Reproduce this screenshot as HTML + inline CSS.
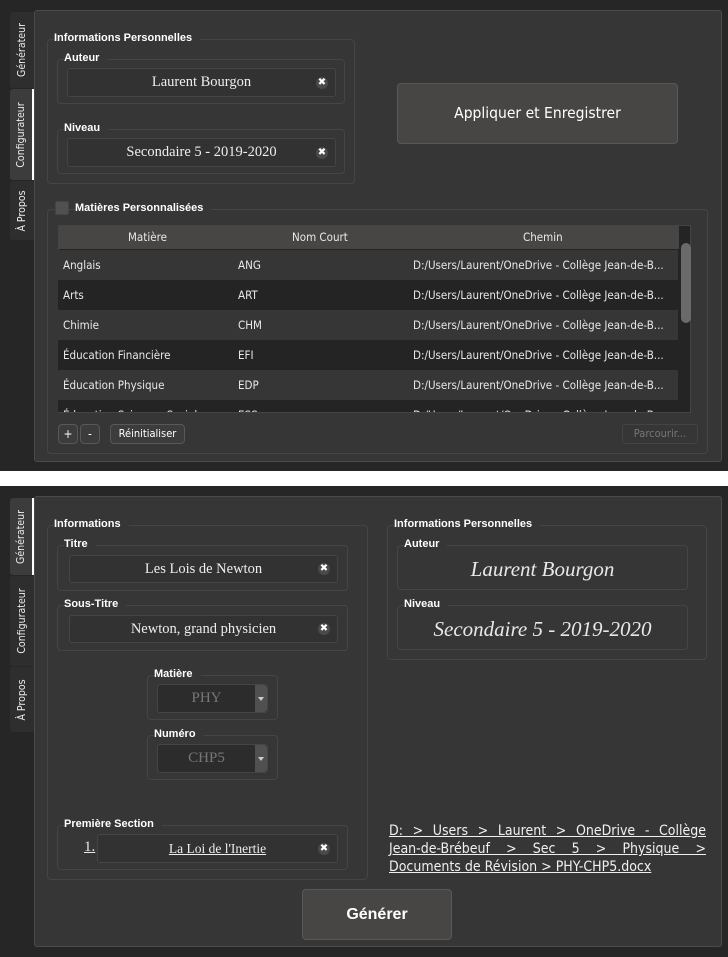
<!DOCTYPE html>
<html><head><meta charset="utf-8"><style>
*{box-sizing:border-box;margin:0;padding:0}
body{width:728px;height:957px;background:#fff;position:relative;overflow:hidden;font-family:"DejaVu Sans Condensed","Liberation Sans",sans-serif;color:#e8e8e8}
.a{position:absolute}
.scr{position:absolute;left:0;width:728px;background:#262626}
.panel{position:absolute;background:#363636;border:1px solid #4a4a4a;border-radius:3px}
.tab{position:absolute;left:10px;width:24px;background:#2e2e2e;border-radius:3px 0 0 3px}
.tab.sel{background:#3c3c3c;border-right:2px solid #fff}
.tab span{position:absolute;left:50%;top:50%;transform:translate(-50%,-50%) rotate(-90deg);white-space:nowrap;font-size:10.5px;color:#eee}
.grp{position:absolute;border:1px solid #454545;border-radius:4px}
.gt{position:absolute;font-family:"Liberation Sans",sans-serif;font-weight:bold;font-size:11px;color:#fff;background:#363636;padding-right:8px;line-height:12px;white-space:nowrap}
.inp{position:absolute;border:1px solid #454545;border-radius:3px;background:#323232;font-family:"Liberation Serif",serif;font-size:14.5px;color:#eee;text-align:center}
.x{position:absolute;right:7px;top:50%;margin-top:-6px;width:12px;height:12px;border-radius:50%;background:#4a4a4a;color:#fff;font-size:10px;line-height:12px;text-align:center;font-family:"DejaVu Sans",sans-serif;font-weight:bold}
.btn{position:absolute;background:#484644;border:1px solid #5a5856;border-radius:4px;text-align:center;color:#fff}
.row{position:absolute;left:58px;width:620px;height:30px;font-size:11.5px;line-height:30px}
.row span{position:absolute}
.cb{position:absolute;border:1px solid #454545;border-radius:3px;background:#2c2c2c;font-family:"Liberation Serif",serif;font-size:15px;color:#777;text-align:center}
.cb i{position:absolute;right:0;top:0;bottom:0;width:12px;background:#505050;border-radius:0 3px 3px 0}
.cb i:after{content:"";position:absolute;left:3px;top:12px;border:3px solid transparent;border-top:4px solid #ccc}
.pl{text-align:justify;text-align-last:justify;white-space:nowrap;height:18px}
</style></head><body>
<div class="scr" style="top:0;height:471px"></div>
<div class="scr" style="top:486px;height:471px"></div>

<!-- TOP -->
<div class="tab" style="top:12px;height:76px"><span>Générateur</span></div>
<div class="tab sel" style="top:89px;height:91px"><span>Configurateur</span></div>
<div class="tab" style="top:181px;height:59px"><span>À Propos</span></div>
<div class="panel" style="left:34px;top:10px;width:688px;height:452px"></div>

<div class="grp" style="left:47px;top:39px;width:308px;height:145px"></div>
<div class="gt" style="left:54px;top:32px">Informations Personnelles</div>
<div class="grp" style="left:57px;top:59px;width:288px;height:45px"></div>
<div class="gt" style="left:64px;top:52px">Auteur</div>
<div class="inp" style="left:67px;top:68px;width:269px;height:29px;line-height:27px">Laurent Bourgon<div class="x">✖</div></div>
<div class="grp" style="left:57px;top:129px;width:288px;height:45px"></div>
<div class="gt" style="left:64px;top:122px">Niveau</div>
<div class="inp" style="left:67px;top:138px;width:269px;height:29px;line-height:27px">Secondaire 5 - 2019-2020<div class="x">✖</div></div>

<div class="btn" style="left:397px;top:83px;width:281px;height:61px;line-height:59px;font-size:15.5px">Appliquer et Enregistrer</div>

<div class="grp" style="left:47px;top:209px;width:661px;height:245px"></div>
<div class="a" style="left:55px;top:201px;width:14px;height:14px;background:#505050;border:1px solid #444;border-radius:2px"></div>
<div class="gt" style="left:75px;top:202px">Matières Personnalisées</div>
<div class="a" style="left:58px;top:225px;width:633px;height:188px;background:#242424;border:1px solid #444;overflow:hidden">
</div>
<div class="a" style="left:59px;top:226px;width:620px;height:23px;background:#484644;font-size:11.5px;line-height:23px">
<span class="a" style="left:69px">Matière</span><span class="a" style="left:233px">Nom Court</span><span class="a" style="left:464px">Chemin</span></div>
<div class="row" style="top:250px;background:#363636"><span style="left:5px">Anglais</span><span style="left:180px">ANG</span><span style="left:355px">D:/Users/Laurent/OneDrive - Collège Jean-de-B...</span></div>
<div class="row" style="top:280px;background:#242424"><span style="left:5px">Arts</span><span style="left:180px">ART</span><span style="left:355px">D:/Users/Laurent/OneDrive - Collège Jean-de-B...</span></div>
<div class="row" style="top:310px;background:#363636"><span style="left:5px">Chimie</span><span style="left:180px">CHM</span><span style="left:355px">D:/Users/Laurent/OneDrive - Collège Jean-de-B...</span></div>
<div class="row" style="top:340px;background:#242424"><span style="left:5px">Éducation Financière</span><span style="left:180px">EFI</span><span style="left:355px">D:/Users/Laurent/OneDrive - Collège Jean-de-B...</span></div>
<div class="row" style="top:370px;background:#363636"><span style="left:5px">Éducation Physique</span><span style="left:180px">EDP</span><span style="left:355px">D:/Users/Laurent/OneDrive - Collège Jean-de-B...</span></div>
<div class="row" style="top:400px;height:12px;background:#242424;overflow:hidden;line-height:30px"><span style="left:5px">Éducation Sciences Sociales</span><span style="left:180px">ESS</span><span style="left:355px">D:/Users/Laurent/OneDrive - Collège Jean-de-B...</span></div>
<div class="a" style="left:681px;top:243px;width:10px;height:80px;background:#6a6a6a;border-radius:5px"></div>

<div class="btn" style="left:58px;top:424px;width:20px;height:20px;line-height:18px;font-size:12px;background:#3c3c3c">+</div>
<div class="btn" style="left:80px;top:424px;width:20px;height:20px;line-height:18px;font-size:12px;background:#3c3c3c">-</div>
<div class="btn" style="left:110px;top:424px;width:75px;height:20px;line-height:18px;font-size:11px;background:#3c3c3c">Réinitialiser</div>
<div class="btn" style="left:622px;top:424px;width:76px;height:20px;line-height:18px;font-size:11px;background:#363636;border-color:#444;color:#777">Parcourir...</div>

<!-- BOTTOM -->
<div class="tab sel" style="top:498px;height:77px"><span>Générateur</span></div>
<div class="tab" style="top:576px;height:90px"><span>Configurateur</span></div>
<div class="tab" style="top:667px;height:65px"><span>À Propos</span></div>
<div class="panel" style="left:34px;top:496px;width:688px;height:451px"></div>

<div class="grp" style="left:47px;top:525px;width:321px;height:355px"></div>
<div class="gt" style="left:54px;top:518px">Informations</div>
<div class="grp" style="left:57px;top:545px;width:291px;height:46px"></div>
<div class="gt" style="left:64px;top:538px">Titre</div>
<div class="inp" style="left:69px;top:555px;width:269px;height:28px;line-height:26px">Les Lois de Newton<div class="x">✖</div></div>
<div class="grp" style="left:57px;top:605px;width:291px;height:46px"></div>
<div class="gt" style="left:64px;top:598px">Sous-Titre</div>
<div class="inp" style="left:69px;top:615px;width:269px;height:28px;line-height:26px">Newton, grand physicien<div class="x">✖</div></div>
<div class="grp" style="left:147px;top:675px;width:131px;height:45px"></div>
<div class="gt" style="left:154px;top:668px">Matière</div>
<div class="cb" style="left:157px;top:684px;width:111px;height:29px;line-height:27px;padding-right:12px">PHY<i></i></div>
<div class="grp" style="left:147px;top:735px;width:131px;height:45px"></div>
<div class="gt" style="left:154px;top:728px">Numéro</div>
<div class="cb" style="left:157px;top:744px;width:111px;height:29px;line-height:27px;padding-right:12px">CHP5<i></i></div>
<div class="grp" style="left:57px;top:825px;width:291px;height:45px"></div>
<div class="gt" style="left:64px;top:818px">Première Section</div>
<div class="a" style="left:84px;top:839px;font-family:'Liberation Serif',serif;font-size:15px;text-decoration:underline">1.</div>
<div class="inp" style="left:97px;top:834px;width:241px;height:29px;line-height:27px;font-size:13.5px;text-decoration:underline">La Loi de l'Inertie<div class="x" style="text-decoration:none">✖</div></div>

<div class="grp" style="left:387px;top:525px;width:320px;height:135px"></div>
<div class="gt" style="left:394px;top:518px">Informations Personnelles</div>
<div class="grp" style="left:397px;top:545px;width:291px;height:45px"></div>
<div class="gt" style="left:404px;top:538px">Auteur</div>
<div class="a" style="left:397px;top:555px;width:291px;text-align:center;font-family:'Liberation Serif',serif;font-style:italic;font-size:21px;line-height:28px">Laurent Bourgon</div>
<div class="grp" style="left:397px;top:605px;width:291px;height:45px"></div>
<div class="gt" style="left:404px;top:598px">Niveau</div>
<div class="a" style="left:397px;top:615px;width:291px;text-align:center;font-family:'Liberation Serif',serif;font-style:italic;font-size:21px;line-height:28px">Secondaire 5 - 2019-2020</div>

<div class="a" style="left:389px;top:822px;width:317px;font-size:14px;line-height:18px;text-decoration:underline;color:#f0f0f0">
<div class="pl">D: &gt; Users &gt; Laurent &gt; OneDrive - Collège</div>
<div class="pl">Jean-de-Brébeuf &gt; Sec 5 &gt; Physique &gt;</div>
<div style="white-space:nowrap">Documents de Révision &gt; PHY-CHP5.docx</div>
</div>

<div class="btn" style="left:302px;top:889px;width:150px;height:51px;line-height:49px;font-size:16px;font-weight:bold;font-family:'Liberation Sans',sans-serif">Générer</div>
</body></html>
